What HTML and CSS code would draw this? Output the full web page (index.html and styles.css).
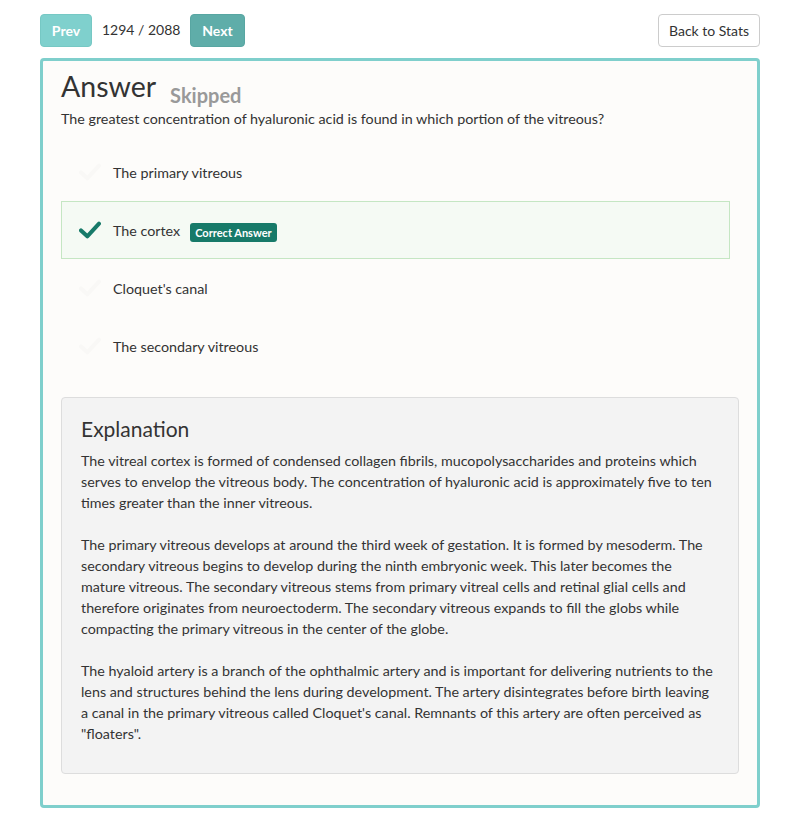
FILE: index.html
```html
<!DOCTYPE html>
<html>
<head>
<meta charset="utf-8">
<link rel="stylesheet" href="styles.css">
</head>
<body>
<div class="topbar">
  <button class="btn btn-prev">Prev</button>
  <span class="count">1294 / 2088</span>
  <button class="btn btn-next">Next</button>
  <button class="btn btn-back">Back to Stats</button>
</div>
<div class="card">
  <div class="title"><h2>Answer</h2><span class="status">Skipped</span></div>
  <p class="question">The greatest concentration of hyaluronic acid is found in which portion of the vitreous?</p>
  <ul class="options">
    <li class="option"><svg class="check" viewBox="0 0 24 20"><path d="M2 10.5 L9 17 L22 3"/></svg><span>The primary vitreous</span></li>
    <li class="option correct"><svg class="check" viewBox="0 0 24 20"><path d="M2 10.5 L9 17 L22 3"/></svg><span>The cortex</span><span class="badge">Correct Answer</span></li>
    <li class="option"><svg class="check" viewBox="0 0 24 20"><path d="M2 10.5 L9 17 L22 3"/></svg><span>Cloquet's canal</span></li>
    <li class="option"><svg class="check" viewBox="0 0 24 20"><path d="M2 10.5 L9 17 L22 3"/></svg><span>The secondary vitreous</span></li>
  </ul>
  <div class="explanation">
    <h3>Explanation</h3>
    <p>The vitreal cortex is formed of condensed collagen fibrils, mucopolysaccharides and proteins which serves to envelop the vitreous body. The concentration of hyaluronic acid is approximately five to ten times greater than the inner vitreous.</p>
    <p>The primary vitreous develops at around the third week of gestation. It is formed by mesoderm. The secondary vitreous begins to develop during the ninth embryonic week. This later becomes the mature vitreous. The secondary vitreous stems from primary vitreal cells and retinal glial cells and therefore originates from neuroectoderm. The secondary vitreous expands to fill the globs while compacting the primary vitreous in the center of the globe.</p>
    <p>The hyaloid artery is a branch of the ophthalmic artery and is important for delivering nutrients to the lens and structures behind the lens during development. The artery disintegrates before birth leaving a canal in the primary vitreous called Cloquet's canal. Remnants of this artery are often perceived as "floaters".</p>
  </div>
</div>
</body>
</html>
```

FILE: styles.css
```css
* { box-sizing: border-box; }
body {
  margin: 0;
  padding: 14px 40px 0;
  background: #fff;
  font-family: Lato, "Open Sans", sans-serif;
  font-size: 14.3px;
  color: #333;
}
.topbar {
  display: flex;
  align-items: center;
  height: 33px;
}
.btn {
  height: 33px;
  border: 1px solid transparent;
  border-radius: 4px;
  font-family: inherit;
  font-size: 14px;
  padding: 0 12px;
  cursor: pointer;
}
.btn-prev {
  width: 52px;
  padding: 0;
  background: #7fd0cd;
  border-color: #76c8c4;
  color: #fff;
  font-weight: bold;
}
.btn-next {
  width: 55px;
  padding: 0;
  background: #5fada9;
  border-color: #58a6a2;
  color: #fff;
  font-weight: bold;
}
.count {
  margin: 0 10px;
  font-size: 14px;
  width: 78px;
  white-space: nowrap;
  position: relative;
  top: -1px;
}
.btn-back {
  margin-left: auto;
  width: 102px;
  padding: 0;
  background: #fff;
  border-color: #ccc;
  color: #333;
}
.card {
  margin-top: 11px;
  border: 3px solid #7fcfcc;
  border-radius: 4px;
  background: #fdfcfa;
  padding: 8px 18px 31px;
}
.title {
  display: flex;
  align-items: baseline;
  height: 34px;
}
.title h2 {
  margin: 0;
  font-size: 28.5px;
  font-weight: normal;
  line-height: 34px;
  color: #333;
}
.status {
  margin-left: 14px;
  font-size: 20px;
  font-weight: bold;
  color: #999;
  position: relative;
  top: 6px;
}
.question {
  margin: 6px 0 0;
  line-height: 20px;
}
.options {
  list-style: none;
  margin: 14px 9px 0 0;
  padding: 0;
}
.option {
  display: flex;
  align-items: center;
  height: 58px;
  padding-left: 17px;
  border: 1px solid transparent;
}
.option.correct {
  background: #f5faf4;
  border-color: #c5e6c3;
}
.check {
  width: 22px;
  height: 18px;
  margin-right: 12px;
  fill: none;
  stroke: #f9f8f6;
  stroke-width: 4.5;
  stroke-linecap: round;
  stroke-linejoin: round;
}
.correct .check { stroke: #177a69; }
.badge {
  margin-left: 10px;
  background: #177a69;
  color: #fff;
  font-size: 11px;
  font-weight: bold;
  padding: 3px 5px;
  border-radius: 3px;
  line-height: 13px;
  position: relative;
  top: 2px;
}
.explanation {
  margin-top: 22px;
  background: #f3f3f3;
  border: 1px solid #ddd;
  border-radius: 4px;
  padding: 18px 19px 8px;
}
.explanation h3 {
  margin: 0 0 8px;
  font-size: 21px;
  font-weight: normal;
  line-height: 26px;
}
.explanation p {
  margin: 0 0 21px;
  line-height: 21px;
}
```
